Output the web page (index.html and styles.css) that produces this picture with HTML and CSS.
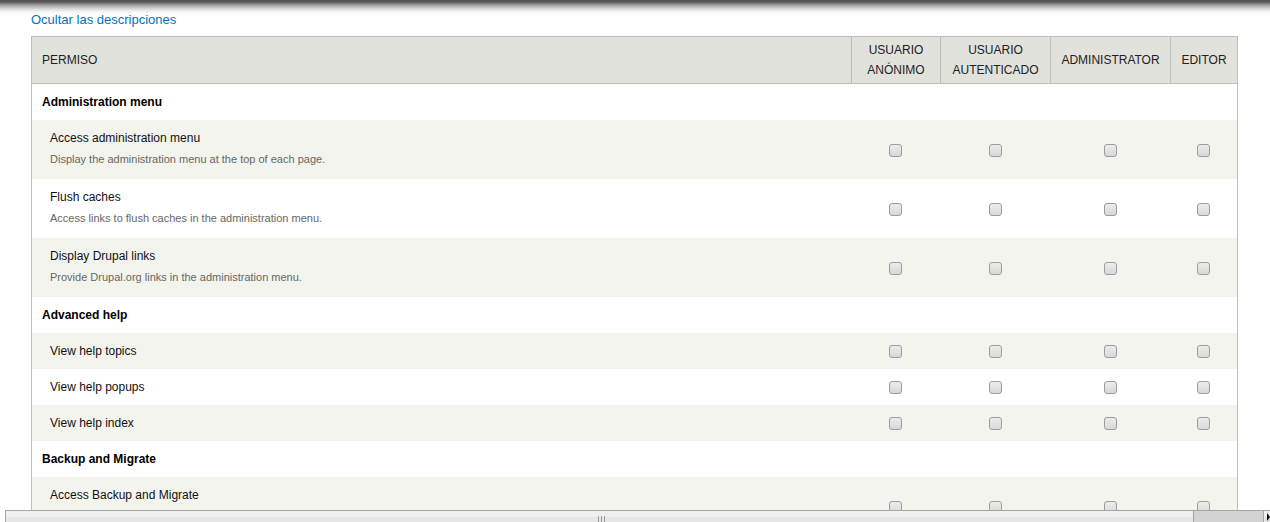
FILE: index.html
```html
<!DOCTYPE html>
<html lang="es">
<head>
<meta charset="utf-8">
<title>Permisos</title>
<link rel="stylesheet" href="styles.css">
</head>
<body>
<div class="top-shadow"></div>
<main class="page">
  <a class="toggle" href="#">Ocultar las descripciones</a>
  <table class="perms">
    <colgroup>
      <col class="c-perm"><col class="c-anon"><col class="c-auth"><col class="c-admin"><col class="c-editor">
    </colgroup>
    <thead>
      <tr>
        <th class="th-perm">PERMISO</th>
        <th>USUARIO<br>ANÓNIMO</th>
        <th>USUARIO<br>AUTENTICADO</th>
        <th>ADMINISTRATOR</th>
        <th>EDITOR</th>
      </tr>
    </thead>
    <tbody>
      <tr class="module"><td colspan="5">Administration menu</td></tr>
      <tr>
        <td class="perm-name"><div class="title">Access administration menu</div><div class="desc">Display the administration menu at the top of each page.</div></td>
        <td class="cb"><input type="checkbox"></td><td class="cb"><input type="checkbox"></td><td class="cb"><input type="checkbox"></td><td class="cb"><input type="checkbox"></td>
      </tr>
      <tr>
        <td class="perm-name"><div class="title">Flush caches</div><div class="desc">Access links to flush caches in the administration menu.</div></td>
        <td class="cb"><input type="checkbox"></td><td class="cb"><input type="checkbox"></td><td class="cb"><input type="checkbox"></td><td class="cb"><input type="checkbox"></td>
      </tr>
      <tr>
        <td class="perm-name"><div class="title">Display Drupal links</div><div class="desc">Provide Drupal.org links in the administration menu.</div></td>
        <td class="cb"><input type="checkbox"></td><td class="cb"><input type="checkbox"></td><td class="cb"><input type="checkbox"></td><td class="cb"><input type="checkbox"></td>
      </tr>
      <tr class="module"><td colspan="5">Advanced help</td></tr>
      <tr>
        <td class="perm-name"><div class="title">View help topics</div></td>
        <td class="cb"><input type="checkbox"></td><td class="cb"><input type="checkbox"></td><td class="cb"><input type="checkbox"></td><td class="cb"><input type="checkbox"></td>
      </tr>
      <tr>
        <td class="perm-name"><div class="title">View help popups</div></td>
        <td class="cb"><input type="checkbox"></td><td class="cb"><input type="checkbox"></td><td class="cb"><input type="checkbox"></td><td class="cb"><input type="checkbox"></td>
      </tr>
      <tr>
        <td class="perm-name"><div class="title">View help index</div></td>
        <td class="cb"><input type="checkbox"></td><td class="cb"><input type="checkbox"></td><td class="cb"><input type="checkbox"></td><td class="cb"><input type="checkbox"></td>
      </tr>
      <tr class="module"><td colspan="5">Backup and Migrate</td></tr>
      <tr class="tall">
        <td class="perm-name"><div class="title">Access Backup and Migrate</div></td>
        <td class="cb"><input type="checkbox"></td><td class="cb"><input type="checkbox"></td><td class="cb"><input type="checkbox"></td><td class="cb"><input type="checkbox"></td>
      </tr>
    </tbody>
  </table>
</main>
<div class="hbar">
  <div class="hbar-track"><span class="grip"><i></i><i></i><i></i></span></div>
  <div class="hbar-thumb"></div>
  <div class="hbar-end"></div>
</div>
</body>
</html>
```

FILE: styles.css
```css
html, body {
  margin: 0;
  padding: 0;
  overflow: hidden;
  background: #fff;
}

body {
  font-family: "Liberation Sans", Arial, sans-serif;
  color: #222;
}

.top-shadow {
  position: fixed;
  top: 0;
  left: 0;
  right: 0;
  height: 15px;
  background: linear-gradient(to bottom,
    rgba(80, 80, 80, 1) 0,
    rgba(90, 90, 90, 1) 2px,
    rgba(90, 90, 90, 0.6) 5px,
    rgba(90, 90, 90, 0.22) 9px,
    rgba(90, 90, 90, 0.05) 12px,
    rgba(90, 90, 90, 0) 15px);
  pointer-events: none;
}

.page {
  padding: 11px 32px 0 31px;
}

.toggle {
  display: block;
  font-size: 13px;
  line-height: 17px;
  color: #0074bd;
  text-decoration: none;
  margin-bottom: 8px;
}

.perms {
  width: 1207px;
  table-layout: fixed;
  border-collapse: separate;
  border-spacing: 0;
  border: 1px solid #bebfb9;
}

.c-perm { width: 819px; }
.c-anon { width: 89px; }
.c-auth { width: 110px; }
.c-admin { width: 120px; }
.c-editor { width: 67px; }

.perms th {
  background: #e1e2dc;
  font-size: 12px;
  font-weight: normal;
  line-height: 20px;
  padding: 3px 10px;
  color: #222;
  text-align: center;
  vertical-align: middle;
  border-bottom: 1px solid #bebfb9;
}

.perms th + th {
  border-left: 1px solid #bebfb9;
}

.perms th.th-perm {
  text-align: left;
}

.perms td {
  padding: 9px 10px 8px;
  vertical-align: middle;
}

.perms tbody tr:nth-child(even) {
  background: #f3f4ee;
}

.module td {
  font-size: 12px;
  font-weight: bold;
  line-height: 19px;
  color: #000;
}

.perms td.perm-name {
  padding-left: 18px;
  vertical-align: top;
}

.tall {
  height: 59px;
}

.title {
  font-size: 12px;
  line-height: 19px;
  color: #111;
}

.desc {
  font-size: 11px;
  line-height: 16px;
  color: #68675f;
  margin: 3px 0 4px;
}

.perms td.cb {
  text-align: center;
  padding: 0;
}

.cb input {
  -webkit-appearance: none;
  appearance: none;
  display: inline-block;
  width: 13px;
  height: 13px;
  margin: 0;
  vertical-align: middle;
  border: 1px solid #9c9c9c;
  border-radius: 3px;
  background: linear-gradient(to bottom, #ececec, #d8d8d8);
  box-sizing: border-box;
}

.hbar {
  position: fixed;
  left: 5px;
  right: 0;
  bottom: 0;
  height: 11px;
  display: flex;
  border-top: 1px solid #a6a6a6;
  border-left: 1px solid #a6a6a6;
  background: linear-gradient(to bottom, #efefef 0, #efefef 6px, #e6e6e6 6px);
}

.hbar-track {
  flex: 1;
  display: flex;
  justify-content: center;
  align-items: flex-end;
  padding-left: 4px;
}

.grip {
  display: flex;
  gap: 2px;
  height: 6px;
}

.grip i {
  display: block;
  width: 1px;
  height: 6px;
  background: #999;
}

.hbar-thumb {
  width: 69px;
  background: #d3d3d3;
  border-left: 1px solid #a6a6a6;
  border-right: 1px solid #a6a6a6;
}

.hbar-end {
  width: 6px;
  position: relative;
}

.hbar-end::after {
  content: "";
  position: absolute;
  right: 0;
  top: 2px;
  border-left: 3px solid #000;
  border-top: 4px solid transparent;
  border-bottom: 4px solid transparent;
}
```
